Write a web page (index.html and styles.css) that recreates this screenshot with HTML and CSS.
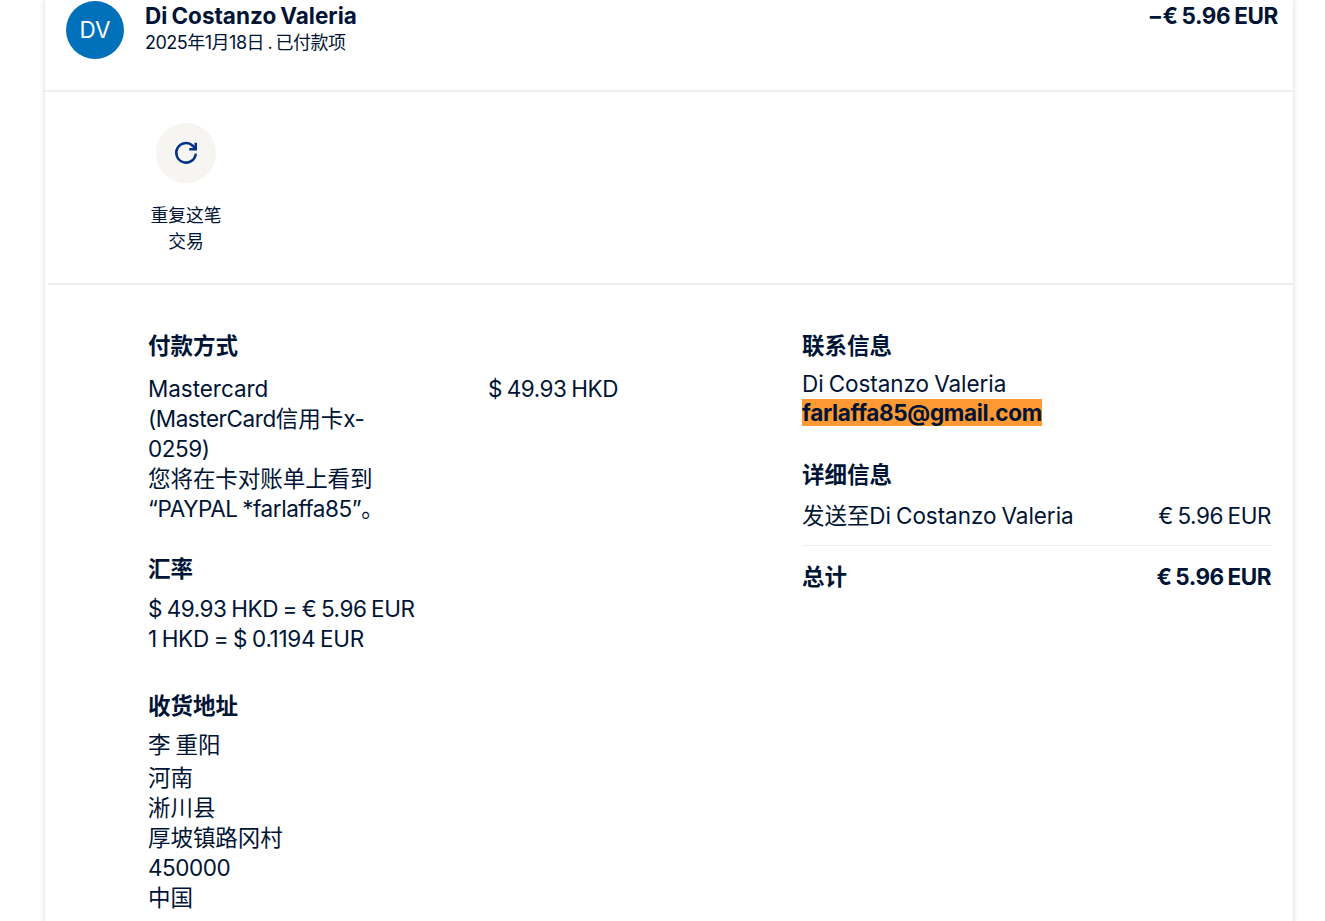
FILE: index.html
```html
<!DOCTYPE html>
<html lang="zh-CN">
<head>
    <meta charset="UTF-8">
    <meta name="viewport" content="width=device-width, initial-scale=1.0">
    <title>交易详情</title>
    <link rel="stylesheet" href="styles.css">
</head>
<body>
    <div class="card">
        <div class="summary">
            <div class="avatar">DV</div>
            <div class="summary-text">
                <div class="summary-name">Di Costanzo Valeria</div>
                <div class="summary-date">2025年1月18日 . 已付款项</div>
            </div>
            <div class="summary-amount">−€ 5.96 EUR</div>
        </div>

        <div class="actions">
            <div class="action">
                <div class="action-icon">
                    <svg width="26" height="26" viewBox="0 0 24 24" fill="none" stroke="#003087" stroke-width="2.3">
                        <path d="M21 12.5a9 9 0 1 1-2.8-7.2L21 8"/>
                        <path d="M21 2.5V8.6h-6"/>
                    </svg>
                </div>
                <div class="action-label">重复这笔交易</div>
            </div>
        </div>

        <div class="details">
            <div class="col-left">
                <section class="block block-pay">
                    <h3>付款方式</h3>
                    <div class="pay-row">
                        <div class="pay-method">
                            Mastercard <span class="num">(MasterCard</span>信用卡<span class="num">x-0259)</span><br>
                            您将在卡对账单上看到 <span class="num">“PAYPAL *farlaffa85”</span>。
                        </div>
                        <div class="num">$ 49.93 HKD</div>
                    </div>
                </section>
                <section class="block block-rate">
                    <h3 class="rate-title">汇率</h3>
                    <div class="num">$ 49.93 HKD = € 5.96 EUR</div>
                    <div class="num-loose">1 HKD = $ 0.1194 EUR</div>
                </section>
                <section class="block">
                    <h3 class="addr-title">收货地址</h3>
                    <div class="addr-name">李 重阳</div>
                    <div>河南</div>
                    <div>淅川县</div>
                    <div>厚坡镇路冈村</div>
                    <div class="num">450000</div>
                    <div>中国</div>
                </section>
            </div>
            <div class="col-right">
                <section class="block block-contact">
                    <h3>联系信息</h3>
                    <div class="contact-name">Di Costanzo Valeria</div>
                    <div class="contact-mail"><mark>farlaffa85@gmail.com</mark></div>
                </section>
                <section class="block">
                    <h3 class="info-title">详细信息</h3>
                    <div class="line">
                        <span>发送至Di Costanzo Valeria</span>
                        <span class="num">€ 5.96 EUR</span>
                    </div>
                    <div class="line total">
                        <span>总计</span>
                        <span class="num">€ 5.96 EUR</span>
                    </div>
                </section>
            </div>
        </div>
    </div>
</body>
</html>
```

FILE: styles.css
```css
html, body {
    height: 921px;
    overflow: hidden;
}
body {
    font-family: Inter, "Noto Sans CJK SC", sans-serif;
    font-size: 22.5px;
    line-height: 30px;
    word-spacing: -1.2px;
    letter-spacing: -0.05px;
    color: #001435;
    background-color: #fff;
    margin: 0;
    padding: 0;
}
.card {
    width: 1248px;
    margin: 0 0 0 45px;
    background-color: #fff;
    box-shadow: 0 0 6px rgba(0, 0, 0, 0.16);
    height: 960px;
}
.summary {
    display: flex;
    align-items: flex-start;
    height: 90px;
    padding: 1px 15px 0 21px;
    border-bottom: 2px solid #eeeeea;
    margin-top: -1px;
}
.avatar {
    width: 58px;
    height: 58px;
    margin-top: 1px;
    border-radius: 50%;
    background-color: #0070ba;
    color: #fff;
    font-size: 22.5px;
    line-height: 58px;
    text-align: center;
    flex-shrink: 0;
}
.summary-text {
    margin-left: 21px;
    flex: 1;
}
.summary-name {
    font-weight: 700;
    font-size: 22.5px;
    line-height: 30px;
    margin-top: 1px;
    letter-spacing: 0;
}
.summary-date {
    font-size: 18px;
    line-height: 24px;
    letter-spacing: -0.5px;
}
.summary-amount {
    font-weight: 700;
    font-size: 22.5px;
    line-height: 30px;
    margin-top: 1px;
    letter-spacing: -0.35px;
}
.actions {
    height: 191px;
    margin-left: 3px;
    padding-left: 86px;
    border-bottom: 2px solid #eeeeea;
}
.action {
    width: 104px;
    padding-top: 31px;
    text-align: center;
}
.action-icon {
    width: 60px;
    height: 60px;
    margin: 0 auto 20px;
    border-radius: 50%;
    background-color: #f7f5f2;
    display: flex;
    align-items: center;
    justify-content: center;
}
.action-label {
    font-size: 17.8px;
    line-height: 26px;
    width: 72px;
    margin: 0 auto;
    letter-spacing: 0;
}
.details {
    display: flex;
    padding: 46px 22px 0 103px;
}
.col-left {
    width: 654px;
}
.col-right {
    flex: 1;
}
.block {
    margin-bottom: 31px;
}
.block-pay {
    margin-bottom: 30px;
}
.block-rate {
    margin-bottom: 37px;
}
.block-contact {
    margin-bottom: 33px;
}
h3 {
    margin: 0 0 13px;
    font-size: 22.5px;
    line-height: 30px;
    font-weight: 700;
    letter-spacing: 0;
}
h3.rate-title {
    margin-bottom: 10px;
}
h3.addr-title {
    margin-bottom: 9px;
}
h3.info-title {
    margin-bottom: 11px;
}
.num {
    letter-spacing: -0.45px;
}
.num-loose {
    letter-spacing: -0.3px;
}
.pay-row {
    display: flex;
}
.pay-method {
    width: 340px;
    padding-right: 90px;
    box-sizing: border-box;
}
.addr-name {
    margin-bottom: 3px;
}
.contact-name {
    line-height: 30px;
    margin-top: -5px;
}
mark {
    background-color: #ff9933;
    color: #001435;
    font-weight: 700;
    letter-spacing: -0.35px;
}
.contact-mail {
    line-height: 28px;
}
.line {
    display: flex;
    justify-content: space-between;
    padding-bottom: 14px;
}
.total {
    font-weight: 700;
    border-top: 1px solid #eeeeea;
    padding-top: 16px;
}
```
